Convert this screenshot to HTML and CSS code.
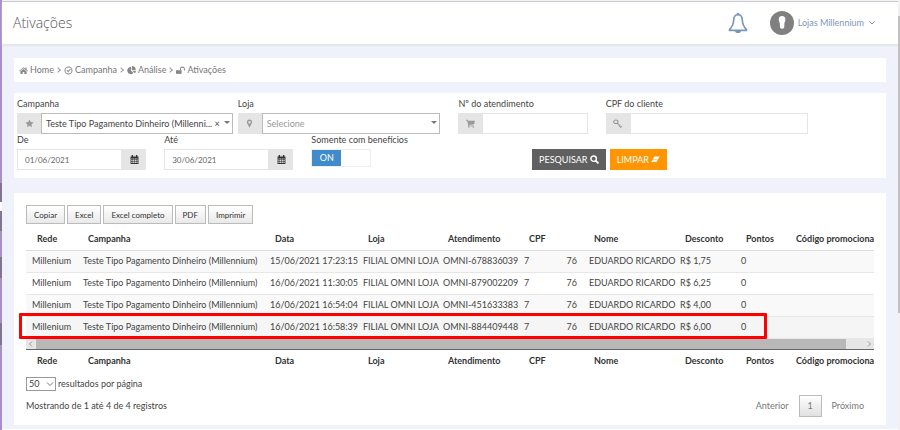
FILE: index.html
```html
<!DOCTYPE html>
<html lang="pt-BR">
<head>
    <meta charset="UTF-8">
    <meta name="viewport" content="width=device-width, initial-scale=1.0">
    <title>Ativações</title>
    <link rel="stylesheet" href="styles.css">
</head>
<body>
    <div class="sidebar-edge"></div>

    <div class="page">
        <header class="topbar">
            <h1>Ativações</h1>
            <div class="user-area">
                <button type="button" class="bell-btn" aria-label="Notificações">
                    <svg class="bell" viewBox="0 0 20 22"><path d="M10 2.800C7 2.800 5.800 5 5.700 8c-.1 4.500-1.600 6.900-4.200 9.600v.8h17v-.8c-2.600-2.700-4.100-5.100-4.200-9.600C14.200 5 13 2.800 10 2.800z" fill="none" stroke="currentColor" stroke-width="1.600" stroke-linejoin="round"/><path d="M7 18.500h6a3 2.600 0 0 1-6 0z" fill="currentColor"/><circle cx="10" cy="2" r="1.300" fill="currentColor"/></svg>
                </button>
                <button type="button" class="user-btn">
                    <svg class="avatar" viewBox="0 0 24 24"><circle cx="12" cy="12" r="12" fill="#808080"/><path d="M12 5c2.300 0 3.500 1.400 3.400 3.500-.1 1.800-.9 2.600-1 4.200-.1 1.700.1 3.400-.5 4.300-.6 1-3 1-3.600 0-.6-.9-.3-2.600-.5-4.300-.1-1.600-1-2.400-1-4.200C8.700 6.400 9.700 5 12 5z" fill="#fff"/></svg>
                    <span>Lojas Millennium</span>
                    <svg class="caret" viewBox="0 0 8 8"><path d="M1.500 2.500 4 5l2.500-2.500" fill="none" stroke="currentColor"/></svg>
                </button>
            </div>
        </header>

        <main>
            <nav class="card breadcrumb">
                <a href="#"><svg class="icon" viewBox="0 0 16 16"><path d="M8 2 0 8.800l1 1.100L8 4l7 5.900 1-1.100-2.500-2.200V2.500h-2v2.400z"/><path d="M8 5.200 2.500 9.800V14h4v-3.500h3V14h4V9.800z"/></svg>Home</a>
                <span class="sep"></span>
                <a href="#"><svg class="icon" viewBox="0 0 16 16"><circle cx="8" cy="8" r="6.200" fill="none" stroke="currentColor" stroke-width="1.800"/><path d="m4.500 7.800 1.300-1.200 1.700 1.700 3.500-3.500 1.200 1.300-4.700 4.800z"/></svg>Campanha</a>
                <span class="sep"></span>
                <a href="#"><svg class="icon" viewBox="0 0 16 16"><path d="M7 1.500V8l4.600 4.600A6.500 6.500 0 1 1 7 1.500z"/><path d="M8.500 0A7 7 0 0 1 15.500 7h-7z"/><path d="M9.500 8.300H16a6.500 6.500 0 0 1-2 4.500z"/></svg>Análise</a>
                <span class="sep"></span>
                <a href="#"><svg class="icon" viewBox="0 0 16 16"><path d="M0 7.500h10V14H0z"/><path d="M8 8V5.500a3.500 3.500 0 0 1 7 0V8" fill="none" stroke="currentColor" stroke-width="1.800"/></svg>Ativações</a>
            </nav>

            <form class="card filters">
                <div class="field w3 wide">
                    <label for="campanha">Campanha</label>
                    <div class="group">
                        <span class="addon"><svg class="icon" viewBox="0 0 16 16"><path d="m8 .8 2.200 4.700 5.100.6-3.800 3.500 1 5.100L8 12.200l-4.500 2.500 1-5.100L.7 6.100l5.100-.6z"/></svg></span>
                        <div class="select">
                            <select id="campanha"><option>Teste Tipo Pagamento Dinheiro (Millenni...</option></select>
                            <button type="button" class="clear" aria-label="Limpar campanha">×</button>
                        </div>
                    </div>
                </div>
                <div class="field w3">
                    <label for="loja">Loja</label>
                    <div class="group">
                        <span class="addon"><svg class="icon" viewBox="0 0 16 16"><path fill-rule="evenodd" d="M8 1a4.600 4.600 0 0 1 4.600 4.600C12.600 8 10 11 8 15.500 6 11 3.400 8 3.400 5.600A4.600 4.600 0 0 1 8 1zm0 2.500a2.200 2.200 0 1 0 0 4.400 2.200 2.200 0 0 0 0-4.400z"/></svg></span>
                        <div class="select">
                            <select id="loja" class="empty"><option>Selecione</option></select>
                        </div>
                    </div>
                </div>
                <div class="field w2">
                    <label for="atendimento">Nº do atendimento</label>
                    <div class="group">
                        <span class="addon"><svg class="icon" viewBox="0 0 16 16"><path d="M0 1.500h3l.5 1.800H16L14.500 9.500 5.200 10.500v1H14V13H3.600L3.800 10 2 3H0z"/><circle cx="5" cy="14.300" r="1.400"/><circle cx="13" cy="14.300" r="1.400"/></svg></span>
                        <input type="text" id="atendimento">
                    </div>
                </div>
                <div class="field w3">
                    <label for="cpf">CPF do cliente</label>
                    <div class="group">
                        <span class="addon"><svg class="icon" viewBox="0 0 16 16"><ellipse cx="5" cy="5" rx="4" ry="3.200" fill="none" stroke="currentColor" stroke-width="1.800"/><path d="m7.500 7.500 6.500 6.500M10.500 13l2.500-2.500M13 15.500l2.500-2.500" fill="none" stroke="currentColor" stroke-width="1.800"/></svg></span>
                        <input type="text" id="cpf">
                    </div>
                </div>

                <div class="field w2 new-row">
                    <label for="de">De</label>
                    <div class="group">
                        <input type="text" id="de" value="01/06/2021">
                        <button type="button" class="addon dark" aria-label="Abrir calendário"><svg class="icon" viewBox="0 0 16 16"><path fill-rule="evenodd" d="M1 2.500h2V0h2.500v2.500h5V0H13v2.500h2V16H1zM2.500 6v2h2V6zm3 0v2h2V6zm3 0v2h2V6zm3 0v2h2V6zm-9 3v2h2V9zm3 0v2h2V9zm3 0v2h2V9zm3 0v2h2V9zm-9 3v2h2v-2zm3 0v2h2v-2zm3 0v2h2v-2zm3 0v2h2v-2z"/></svg></button>
                    </div>
                </div>
                <div class="field w2">
                    <label for="ate">Até</label>
                    <div class="group">
                        <input type="text" id="ate" value="30/06/2021">
                        <button type="button" class="addon dark" aria-label="Abrir calendário"><svg class="icon" viewBox="0 0 16 16"><path fill-rule="evenodd" d="M1 2.500h2V0h2.500v2.500h5V0H13v2.500h2V16H1zM2.500 6v2h2V6zm3 0v2h2V6zm3 0v2h2V6zm3 0v2h2V6zm-9 3v2h2V9zm3 0v2h2V9zm3 0v2h2V9zm3 0v2h2V9zm-9 3v2h2v-2zm3 0v2h2v-2zm3 0v2h2v-2zm3 0v2h2v-2z"/></svg></button>
                    </div>
                </div>
                <div class="field w3">
                    <label for="beneficios">Somente com benefícios</label>
                    <label class="switch">
                        <input type="checkbox" id="beneficios" checked>
                        <span>ON</span>
                    </label>
                </div>
                <div class="actions">
                    <button type="submit" class="btn btn-search">PESQUISAR <svg class="icon" viewBox="0 0 16 16"><circle cx="6.500" cy="6.500" r="4.800" fill="none" stroke="currentColor" stroke-width="2.600"/><path d="m10 10 5 5" stroke="currentColor" stroke-width="3"/></svg></button>
                    <button type="reset" class="btn btn-clear">LIMPAR <svg class="icon" viewBox="0 0 18 16"><path d="M7 2h10.500L11 13H.5z"/><path d="M3.500 8.500h10" stroke="#ff9500" stroke-width="1.200"/></svg></button>
                </div>
            </form>

            <section class="card results">
                <div class="tools">
                    <button type="button">Copiar</button>
                    <button type="button">Excel</button>
                    <button type="button">Excel completo</button>
                    <button type="button">PDF</button>
                    <button type="button">Imprimir</button>
                </div>

                <div class="grid">
                    <div class="scroller">
                        <table>
                            <colgroup><col class="c-rede"><col class="c-campanha"><col class="c-data"><col class="c-loja"><col class="c-atend"><col class="c-cpf"><col class="c-nome"><col class="c-desc"><col class="c-pontos"><col class="c-codigo"></colgroup>
                            <thead>
                                <tr><th>Rede</th><th>Campanha</th><th>Data</th><th>Loja</th><th>Atendimento</th><th>CPF</th><th>Nome</th><th>Desconto</th><th>Pontos</th><th>Código promocional</th></tr>
                            </thead>
                            <tbody>
                                <tr><td>Millenium</td><td>Teste Tipo Pagamento Dinheiro (Millennium)</td><td>15/06/2021 17:23:15</td><td>FILIAL OMNI LOJA</td><td>OMNI-678836039</td><td><div class="cpf"><span>7</span><span>76</span></div></td><td>EDUARDO RICARDO</td><td>R$ 1,75</td><td>0</td><td></td></tr>
                                <tr><td>Millenium</td><td>Teste Tipo Pagamento Dinheiro (Millennium)</td><td>16/06/2021 11:30:05</td><td>FILIAL OMNI LOJA</td><td>OMNI-879002209</td><td><div class="cpf"><span>7</span><span>76</span></div></td><td>EDUARDO RICARDO</td><td>R$ 6,25</td><td>0</td><td></td></tr>
                                <tr><td>Millenium</td><td>Teste Tipo Pagamento Dinheiro (Millennium)</td><td>16/06/2021 16:54:04</td><td>FILIAL OMNI LOJA</td><td>OMNI-451633383</td><td><div class="cpf"><span>7</span><span>76</span></div></td><td>EDUARDO RICARDO</td><td>R$ 4,00</td><td>0</td><td></td></tr>
                                <tr class="active"><td>Millenium</td><td>Teste Tipo Pagamento Dinheiro (Millennium)</td><td>16/06/2021 16:58:39</td><td>FILIAL OMNI LOJA</td><td>OMNI-884409448</td><td><div class="cpf"><span>7</span><span>76</span></div></td><td>EDUARDO RICARDO</td><td>R$ 6,00</td><td>0</td><td></td></tr>
                            </tbody>
                        </table>
                    </div>
                    <div class="highlight"></div>
                </div>

                <div class="scrollbar">
                    <svg viewBox="0 0 10 10"><path d="M6 2.500 3.500 5 6 7.500" fill="none" stroke="#999"/></svg>
                    <div class="thumb"></div>
                    <svg viewBox="0 0 10 10"><path d="M4 2.500 6.500 5 4 7.500" fill="none" stroke="#999"/></svg>
                </div>

                <div class="scroller">
                    <table>
                        <colgroup><col class="c-rede"><col class="c-campanha"><col class="c-data"><col class="c-loja"><col class="c-atend"><col class="c-cpf"><col class="c-nome"><col class="c-desc"><col class="c-pontos"><col class="c-codigo"></colgroup>
                        <tfoot>
                            <tr><th>Rede</th><th>Campanha</th><th>Data</th><th>Loja</th><th>Atendimento</th><th>CPF</th><th>Nome</th><th>Desconto</th><th>Pontos</th><th>Código promocional</th></tr>
                        </tfoot>
                    </table>
                </div>

                <div class="length">
                    <div class="length-select">
                        <select id="porPagina"><option>50</option></select>
                        <svg viewBox="0 0 8 8"><path d="M1 2.500 4 5.500l3-3" fill="none" stroke="currentColor"/></svg>
                    </div>
                    <label for="porPagina">resultados por página</label>
                </div>

                <div class="bottom">
                    <span>Mostrando de 1 até 4 de 4 registros</span>
                    <div class="pager">
                        <a href="#">Anterior</a>
                        <a href="#" class="current">1</a>
                        <a href="#">Próximo</a>
                    </div>
                </div>
            </section>
        </main>
    </div>

    <div class="page-scroll"></div>
</body>
</html>
```

FILE: styles.css
```css
* {
    box-sizing: border-box;
}

body {
    display: flex;
    min-height: 100vh;
    margin: 0;
    background: #fff;
    color: #444;
    font-family: Lato, "Open Sans", sans-serif;
    font-size: 9px;
    line-height: 12px;
}

button, input, select {
    margin: 0;
    font: inherit;
    color: inherit;
}

a {
    color: inherit;
    text-decoration: none;
}

.icon {
    width: 9px;
    height: 9px;
    fill: currentColor;
}

/* sliver of the collapsed menu and of the window scrollbar */
.sidebar-edge {
    width: 2px;
    background: linear-gradient(#a88fc9 183px, #81758f 183px 202px, #fff 202px 211px, #81758f 211px 231px, #a88fc9 231px 257px, #81758f 257px 278px, #a88fc9 278px 323px, #81758f 323px 345px, #a88fc9 345px);
}

.page-scroll {
    width: 2px;
    background: linear-gradient(#f1f1f1 16px, #c1c1c1 16px 313px, #f1f1f1 313px);
}

.page {
    flex: 1;
    min-width: 0;
    padding-top: 1px;
    margin-bottom: 2px;
    background: #eff2fa;
}

.topbar {
    display: flex;
    align-items: center;
    justify-content: space-between;
    height: 43px;
    padding: 0 22px 0 11px;
    border-top: 1px solid #ccc;
    background: #fff;
    box-shadow: 0 2px 1px #e4e6ec;
}

h1 {
    margin: 0;
    font-family: "Open Sans", sans-serif;
    font-size: 14px;
    font-weight: 300;
    line-height: 20px;
    color: #555;
}

.user-area {
    display: flex;
    align-items: center;
    gap: 22px;
    color: #8097b8;
}

.bell-btn, .user-btn {
    display: flex;
    align-items: center;
    padding: 0;
    border: 0;
    background: none;
}

.user-btn {
    gap: 4px;
}

.bell {
    width: 20px;
    height: 22px;
    color: #7896b8;
}

.avatar {
    width: 24px;
    height: 24px;
}

.caret {
    width: 8px;
    height: 8px;
}

main {
    display: flex;
    flex-direction: column;
    padding: 14px 12px 4px 12px;
}

.card {
    background: #fff;
}

.breadcrumb {
    display: flex;
    align-items: center;
    gap: 4px;
    height: 24px;
    padding: 0 5px;
    color: #777;
}

.breadcrumb a {
    display: flex;
    align-items: center;
    gap: 2px;
}

.breadcrumb .icon {
    color: #888;
}

.sep {
    width: 4px;
    height: 4px;
    margin-left: -2px;
    border: solid #999;
    border-width: 1px 1px 0 0;
    transform: rotate(45deg);
}

.filters {
    display: grid;
    grid-template-columns: repeat(12, 1fr);
    column-gap: 18px;
    margin-top: 11px;
    padding: 5px 4px 8px 3px;
}

.field {
    display: flex;
    flex-direction: column;
    gap: 3px;
    height: 36px;
    white-space: nowrap;
}

.w2 {
    grid-column: span 2;
}

.w3 {
    grid-column: span 3;
}

.wide {
    margin-right: -13px;
}

.new-row {
    grid-column: 1 / span 2;
}

.group {
    display: flex;
    height: 21px;
}

.addon {
    display: flex;
    align-items: center;
    justify-content: center;
    width: 24px;
    flex: none;
    padding: 0;
    border: 0;
    background: #e5e5e5;
    color: #999;
}

.addon.dark {
    color: #333;
}

.group input {
    flex: 1;
    min-width: 0;
    padding: 0 7px;
    border: 1px solid #e5e5e5;
    background: #fff;
    color: #666;
    font-size: 8px;
}

.select {
    position: relative;
    flex: 1;
    min-width: 0;
}

.select::after {
    content: "";
    position: absolute;
    top: 8px;
    right: 3px;
    border: 3px solid transparent;
    border-top-color: #777;
}

.select select {
    appearance: none;
    width: 100%;
    height: 21px;
    padding: 0 10px 0 4px;
    border: 1px solid #bbb;
    border-radius: 0;
    background: #fff;
}

.select .empty {
    color: #999;
}

.clear {
    position: absolute;
    top: 5px;
    right: 13px;
    padding: 0;
    border: 0;
    background: none;
}

.switch {
    display: flex;
    width: 60px;
    height: 18px;
    border: 1px solid #eee;
}

.switch input {
    position: absolute;
    opacity: 0;
}

.switch span {
    width: 29px;
    background: #428bca;
    color: #fff;
    line-height: 16px;
    text-align: center;
}

.actions {
    grid-column: 8 / span 5;
    display: flex;
    align-items: flex-start;
    gap: 4px;
    padding-top: 15px;
}

.btn {
    height: 21px;
    padding: 0 7px;
    border: 0;
    color: #fff;
    white-space: nowrap;
}

.btn .icon {
    vertical-align: -1px;
}

.btn-search {
    background: #606060;
}

.btn-clear {
    background: #ff9500;
}

.results {
    margin-top: 15px;
    padding: 12px;
}

.tools {
    display: flex;
    gap: 2px;
}

.tools button {
    height: 19px;
    padding: 0 7px;
    border: 1px solid #bbb;
    background: linear-gradient(#fff, #e9e9e9);
    color: #333;
    font-size: 8px;
}

.grid {
    position: relative;
    margin-top: 4px;
}

.scroller {
    overflow: hidden;
}

table {
    width: 898px;
    table-layout: fixed;
    border-collapse: collapse;
    white-space: nowrap;
}

.c-rede { width: 51px; }
.c-campanha { width: 187px; }
.c-data { width: 93px; }
.c-loja { width: 80px; }
.c-atend { width: 81px; }
.c-cpf { width: 65px; }
.c-nome { width: 91px; }
.c-desc { width: 61px; }
.c-pontos { width: 50px; }

th, td {
    height: 22px;
    padding: 0 6px;
    text-align: left;
}

th {
    padding: 0 11px;
    color: #333;
}

thead th {
    border-bottom: 1px solid #ddd;
}

td {
    border-bottom: 1px solid #e7e7e7;
}

tbody tr:nth-child(odd) {
    background: #f9f9f9;
}

tbody .active {
    background: #f5f5f5;
}

.cpf {
    display: flex;
    justify-content: space-between;
}

.highlight {
    position: absolute;
    bottom: 0;
    left: -7px;
    width: 748px;
    height: 26px;
    border: 3px solid #f00;
    border-radius: 1px;
}

.scrollbar {
    display: flex;
    height: 11px;
    border-bottom: 1px solid #666;
    background: #e6e6e6;
}

.scrollbar svg {
    width: 10px;
    height: 10px;
}

.thumb {
    flex: 1;
    margin-right: 18px;
    background: #b8b8b8;
}

.length {
    display: flex;
    align-items: center;
    gap: 2px;
    margin-top: 5px;
}

.length-select {
    position: relative;
    width: 30px;
}

.length select {
    appearance: none;
    display: block;
    width: 100%;
    height: 14px;
    padding: 0 2px;
    border: 1px solid #999;
    border-radius: 0;
    background: #fff;
}

.length-select svg {
    position: absolute;
    top: 3px;
    right: 2px;
    width: 8px;
    height: 8px;
    color: #777;
}

.bottom {
    display: flex;
    align-items: center;
    justify-content: space-between;
    height: 22px;
    margin: 4px 0 -4px;
}

.pager {
    display: flex;
    align-items: center;
    gap: 10px;
    padding-right: 10px;
    color: #777;
}

.pager .current {
    width: 23px;
    border: 1px solid #bbb;
    background: linear-gradient(#fff, #e0e0e0);
    line-height: 20px;
    text-align: center;
}
```
